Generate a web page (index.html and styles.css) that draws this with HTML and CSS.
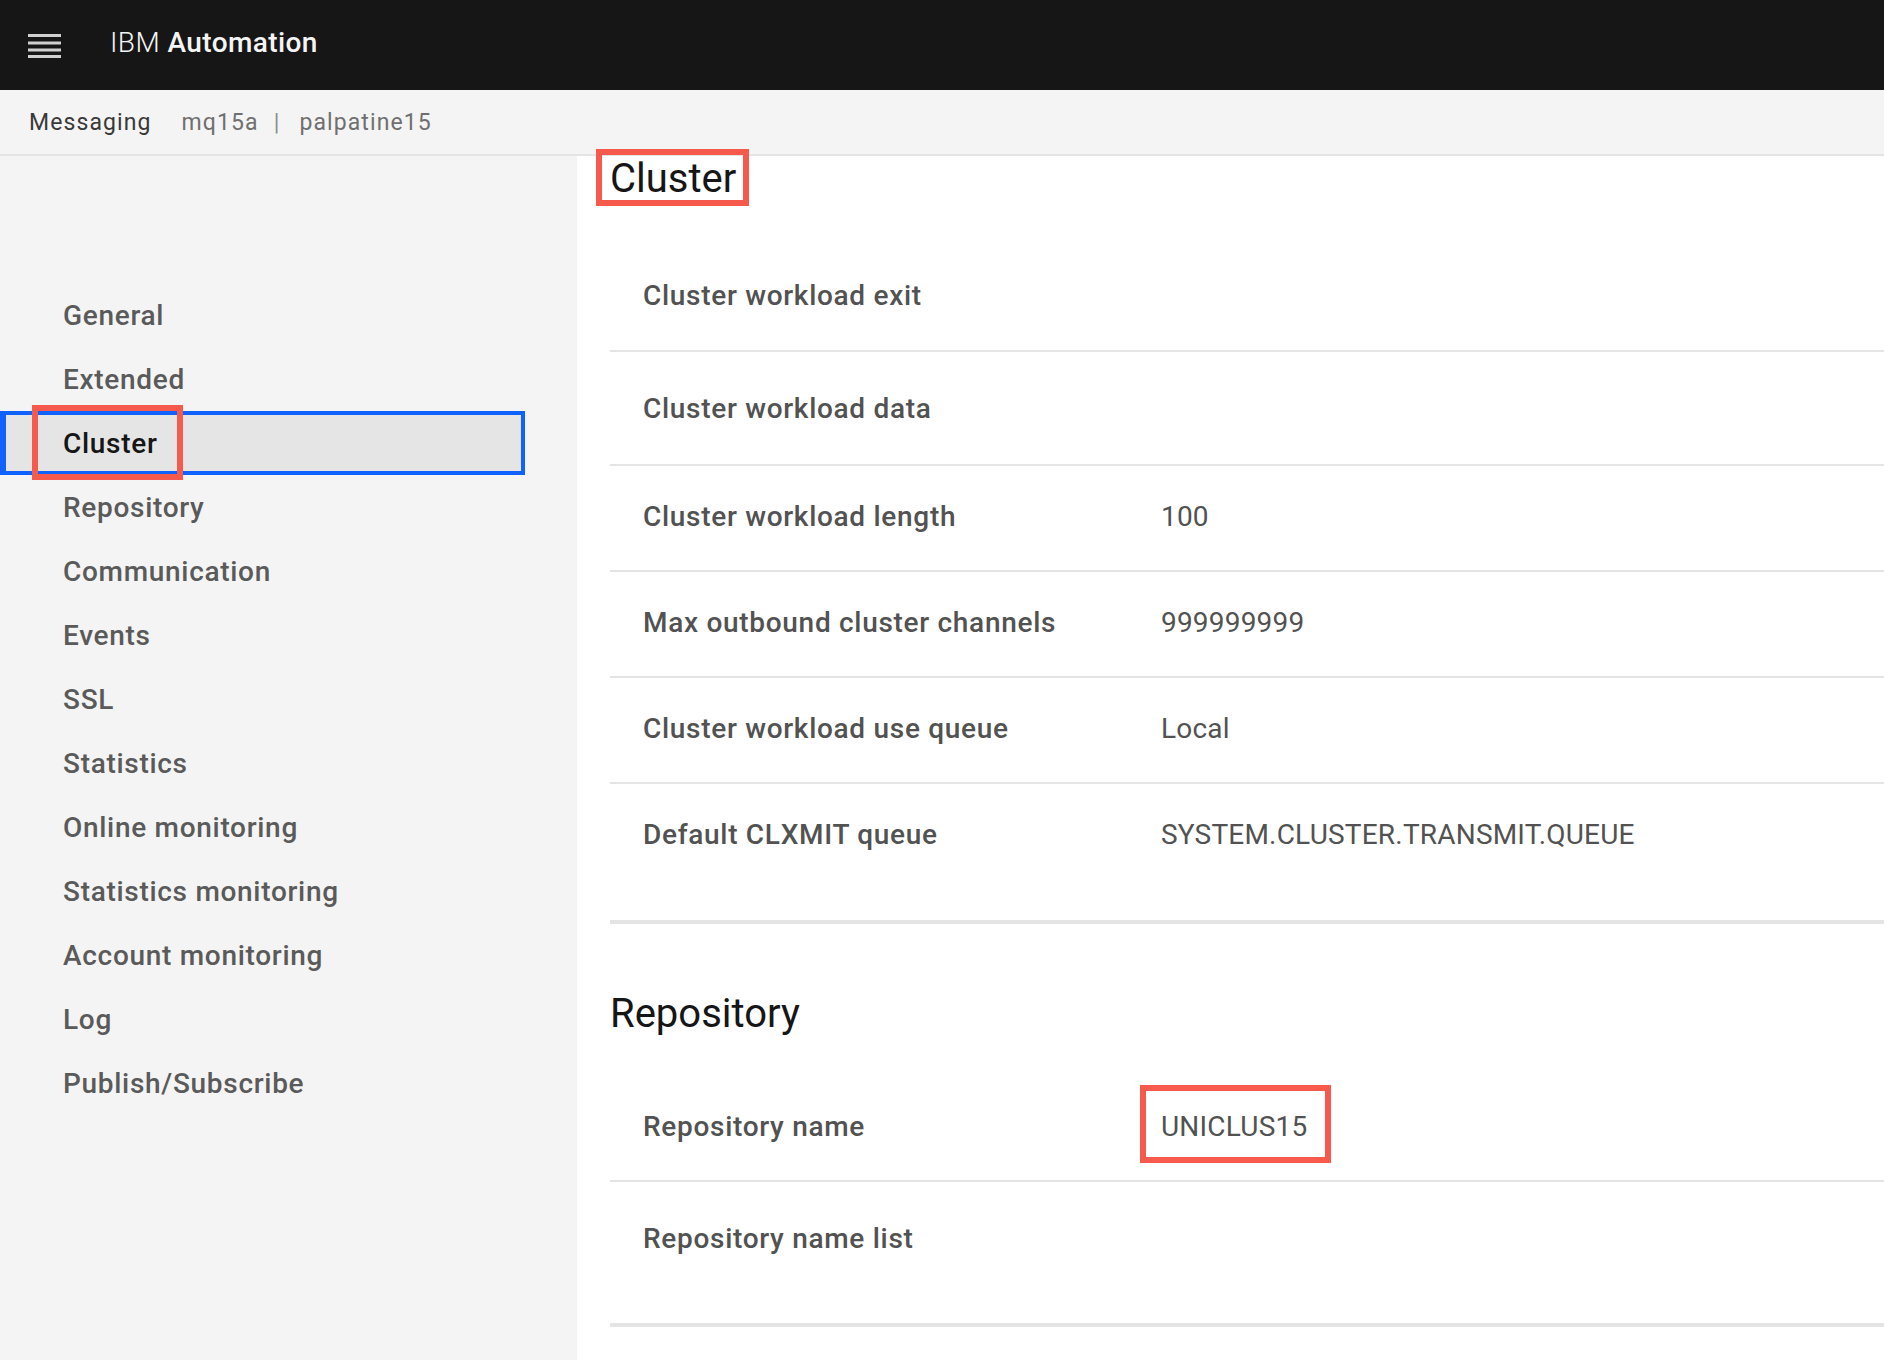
FILE: index.html
```html
<!DOCTYPE html>
<html lang="en">
<head>
<meta charset="utf-8">
<title>IBM Automation - Queue manager properties</title>
<link rel="stylesheet" href="styles.css">
</head>
<body>
<div class="app">
  <header class="topbar">
    <button class="menu-btn" aria-label="Menu">
      <svg width="33" height="25" viewBox="0 0 33 25" aria-hidden="true">
        <rect x="0" y="1" width="33" height="3" fill="#d0d0d0"/>
        <rect x="0" y="8.5" width="33" height="3" fill="#d0d0d0"/>
        <rect x="0" y="15.5" width="33" height="3" fill="#d0d0d0"/>
        <rect x="0" y="22" width="33" height="3" fill="#d0d0d0"/>
      </svg>
    </button>
    <div class="brand"><span class="brand-ibm">IBM</span> <span class="brand-name">Automation</span></div>
  </header>
  <nav class="crumbs">
    <span class="crumb-root">Messaging</span>
    <span class="crumb-item">mq15a</span>
    <span class="crumb-sep">|</span>
    <span class="crumb-item">palpatine15</span>
  </nav>
  <div class="body">
    <aside class="sidebar">
      <ul class="side-list">
        <li class="side-item">General</li>
        <li class="side-item">Extended</li>
        <li class="side-item is-active"><span class="annot annot-side">Cluster</span></li>
        <li class="side-item">Repository</li>
        <li class="side-item">Communication</li>
        <li class="side-item">Events</li>
        <li class="side-item">SSL</li>
        <li class="side-item">Statistics</li>
        <li class="side-item">Online monitoring</li>
        <li class="side-item">Statistics monitoring</li>
        <li class="side-item">Account monitoring</li>
        <li class="side-item">Log</li>
        <li class="side-item">Publish/Subscribe</li>
      </ul>
    </aside>
    <main class="main">
      <section class="prop-section">
        <h2 class="section-title"><span class="annot annot-title">Cluster</span></h2>
        <div class="prop-row first"><div class="prop-label">Cluster workload exit</div><div class="prop-value"></div></div>
        <div class="prop-row is-empty"><div class="prop-label">Cluster workload data</div><div class="prop-value"></div></div>
        <div class="prop-row"><div class="prop-label">Cluster workload length</div><div class="prop-value">100</div></div>
        <div class="prop-row"><div class="prop-label">Max outbound cluster channels</div><div class="prop-value">999999999</div></div>
        <div class="prop-row"><div class="prop-label">Cluster workload use queue</div><div class="prop-value">Local</div></div>
        <div class="prop-row"><div class="prop-label">Default CLXMIT queue</div><div class="prop-value">SYSTEM.CLUSTER.TRANSMIT.QUEUE</div></div>
      </section>
      <section class="prop-section second">
        <h2 class="section-title">Repository</h2>
        <div class="prop-row"><div class="prop-label">Repository name</div><div class="prop-value"><span class="annot annot-value">UNICLUS15</span></div></div>
        <div class="prop-row is-empty"><div class="prop-label">Repository name list</div><div class="prop-value"></div></div>
      </section>
    </main>
  </div>
</div>
</body>
</html>
```
FILE: styles.css
```css
* { box-sizing: border-box; }
html, body {
  margin: 0;
  padding: 0;
}
body {
  width: 1884px;
  height: 1360px;
  overflow: hidden;
  font-family: Roboto, "Liberation Sans", Arial, sans-serif;
  background: #ffffff;
  color: #161616;
}
.app {
  display: flex;
  flex-direction: column;
  height: 1360px;
}
.topbar {
  height: 90px;
  background: #161616;
  display: flex;
  align-items: center;
  flex: none;
}
.menu-btn {
  margin-left: 28px;
  width: 33px;
  height: 25px;
  padding: 0;
  border: 0;
  background: transparent;
  display: flex;
  align-items: center;
  justify-content: center;
}
.menu-btn svg { display: block; }
.brand {
  margin-left: 49px;
  font-size: 28px;
  line-height: 32px;
  color: #f4f4f4;
  letter-spacing: 0.4px;
  position: relative;
  top: -2px;
}
.brand-ibm { font-weight: 300; }
.brand-name { font-weight: 500; }
.crumbs {
  height: 66px;
  flex: none;
  background: #f4f4f4;
  border-bottom: 2px solid #e4e4e4;
  display: flex;
  align-items: center;
  padding-left: 29px;
  font-size: 23px;
  letter-spacing: 1.1px;
  color: #6f6f6f;
}
.crumb-root { color: #393939; margin-right: 30px; }
.crumb-sep { margin: 0 19px 0 15px; color: #8d8d8d; }
.body {
  flex: 1;
  display: flex;
  min-height: 0;
}
.sidebar {
  width: 577px;
  flex: none;
  background: #f4f4f4;
}
.side-list {
  list-style: none;
  margin: 0;
  padding: 127px 0 0 0;
}
.side-item {
  width: 525px;
  height: 64px;
  padding-left: 63px;
  display: flex;
  align-items: center;
  font-size: 28px;
  font-weight: 500;
  letter-spacing: 0.7px;
  color: #5a5a5a;
}
.side-item.is-active {
  background: #e5e5e5;
  border: 4px solid #0f62fe;
  border-left-width: 6px;
  padding-left: 57px;
  color: #161616;
}
.main {
  flex: 1;
  padding-left: 33px;
  min-width: 0;
}
.prop-section {
  border-bottom: 4px solid #e4e4e4;
}
.prop-section.second {
  margin-top: 67px;
}
.section-title {
  margin: 0 0 43px 0;
  font-size: 40px;
  line-height: 46px;
  font-weight: 400;
  color: #161616;
}
.prop-section.second .section-title { margin-bottom: 39px; }
.prop-row {
  display: grid;
  grid-template-columns: 518px 1fr;
  padding: 35px 0 37px 33px;
  border-bottom: 2px solid #e4e4e4;
  font-size: 28px;
  line-height: 32px;
}
.prop-row.first { padding-bottom: 38px; }
.prop-row.is-empty {
  padding-top: 41px;
  padding-bottom: 39px;
}
.prop-row:last-child {
  border-bottom: 0;
  padding-bottom: 69px;
}
.prop-row.is-empty:last-child { padding-bottom: 68px; }
.prop-label {
  font-weight: 500;
  color: #525252;
  letter-spacing: 0.7px;
}
.prop-value {
  font-weight: 400;
  color: #525252;
  letter-spacing: 0.2px;
  min-height: 32px;
}
.annot {
  position: relative;
  display: inline-block;
}
.annot::after {
  content: "";
  position: absolute;
  border: 6px solid #f65a4c;
  pointer-events: none;
}
.annot-title::after { left: -14px; right: -13px; top: -7px; bottom: -4px; }
.annot-side::after { left: -31px; right: -25px; top: -22px; bottom: -20px; }
.annot-value::after { left: -21px; right: -24px; top: -26px; bottom: -20px; }
```
